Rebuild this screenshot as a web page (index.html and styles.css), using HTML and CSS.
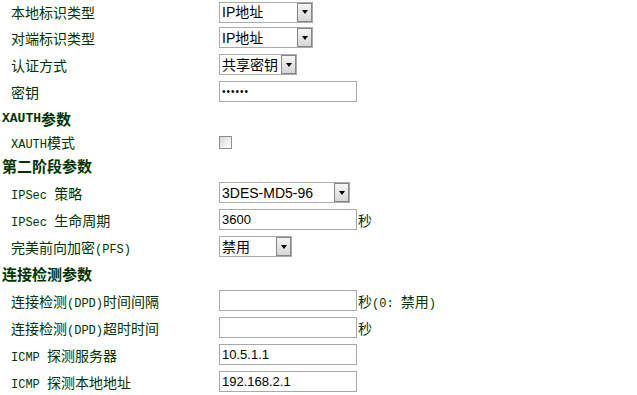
FILE: index.html
```html
<!DOCTYPE html>
<html lang="zh-CN">
<head>
    <meta charset="UTF-8">
    <link rel="stylesheet" href="styles.css">
    <title>IPSec 参数</title>
</head>
<body>

    <div class="form">
        <div class="row">
            <div class="label">本地标识类型</div>
            <div class="field">
                <span class="select select-lg"><select><option>IP地址</option></select><span class="arrow"></span></span>
            </div>
        </div>
        <div class="row">
            <div class="label">对端标识类型</div>
            <div class="field">
                <span class="select select-lg"><select><option>IP地址</option></select><span class="arrow"></span></span>
            </div>
        </div>
        <div class="row">
            <div class="label">认证方式</div>
            <div class="field">
                <span class="select select-md"><select><option>共享密钥</option></select><span class="arrow"></span></span>
            </div>
        </div>
        <div class="row">
            <div class="label">密钥</div>
            <div class="field">
                <input class="text pass" type="password" value="123456">
            </div>
        </div>

        <div class="row heading"><span class="en">XAUTH</span>参数</div>
        <div class="row row-check">
            <div class="label"><span class="en">XAUTH</span>模式</div>
            <div class="field">
                <input class="check" type="checkbox">
            </div>
        </div>

        <div class="row heading">第二阶段参数</div>
        <div class="row">
            <div class="label"><span class="en">IPSec </span>策略</div>
            <div class="field">
                <span class="select select-xl"><select><option>3DES-MD5-96</option></select><span class="arrow"></span></span>
            </div>
        </div>
        <div class="row">
            <div class="label"><span class="en">IPSec </span>生命周期</div>
            <div class="field">
                <input class="text" type="text" value="3600"><span class="unit">秒</span>
            </div>
        </div>
        <div class="row">
            <div class="label">完美前向加密<span class="en">(PFS)</span></div>
            <div class="field">
                <span class="select select-sm"><select><option>禁用</option></select><span class="arrow"></span></span>
            </div>
        </div>

        <div class="row heading">连接检测参数</div>
        <div class="row">
            <div class="label">连接检测<span class="en">(DPD)</span>时间间隔</div>
            <div class="field">
                <input class="text" type="text" value=""><span class="unit">秒<span class="en">(0: </span>禁用<span class="en">)</span></span>
            </div>
        </div>
        <div class="row">
            <div class="label">连接检测<span class="en">(DPD)</span>超时时间</div>
            <div class="field">
                <input class="text" type="text" value=""><span class="unit">秒</span>
            </div>
        </div>
        <div class="row">
            <div class="label"><span class="en">ICMP </span>探测服务器</div>
            <div class="field">
                <input class="text" type="text" value="10.5.1.1">
            </div>
        </div>
        <div class="row">
            <div class="label"><span class="en">ICMP </span>探测本地地址</div>
            <div class="field">
                <input class="text" type="text" value="192.168.2.1">
            </div>
        </div>
    </div>

</body>
</html>
```

FILE: styles.css
```css
body {
    margin: 0;
    padding: 0;
    background-color: #ffffff;
    font-family: "Noto Sans CJK SC", sans-serif;
    font-size: 14px;
    color: #003300;
}

.form {
    display: flex;
    flex-direction: column;
}

.row {
    display: flex;
    align-items: center;
    height: 27px;
}

.row:first-child {
    height: 24px;
}

.row-check {
    height: 20px;
}

.label {
    width: 219px;
    padding-left: 11px;
    box-sizing: border-box;
    white-space: nowrap;
}

.heading {
    padding-left: 2px;
    font-size: 15px;
    font-weight: bold;
}

.en {
    font-family: "Liberation Mono", monospace;
    font-size: 12px;
}

.heading .en {
    font-size: 13px;
}

.field {
    display: flex;
    align-items: center;
}

/* dropdowns */
.select {
    display: inline-flex;
    height: 21px;
    box-sizing: border-box;
    border: 1px solid #a5acb2;
    background-color: #ffffff;
}

.select-sm { width: 73px; }
.select-md { width: 78px; }
.select-lg { width: 94px; }
.select-xl { width: 131px; }

.select select {
    flex: 1;
    min-width: 0;
    -webkit-appearance: none;
    appearance: none;
    border: 0;
    outline: none;
    background: transparent;
    padding: 0 0 0 2px;
    margin: 0;
    font-family: "Liberation Sans", "Noto Sans CJK SC", sans-serif;
    font-size: 14px;
    color: #000000;
}

.arrow {
    width: 15px;
    box-sizing: border-box;
    border: 1px solid #868686;
    background: linear-gradient(#f6f6f6, #d6d6d6);
    display: flex;
    align-items: center;
    justify-content: center;
}

.arrow::after {
    content: "";
    border-left: 3px solid transparent;
    border-right: 3px solid transparent;
    border-top: 4px solid #000000;
}

/* text inputs */
.text {
    width: 138px;
    height: 21px;
    box-sizing: border-box;
    margin: 0;
    padding: 0 2px;
    border: 1px solid #a9a9a9;
    outline: none;
    font-family: "Liberation Sans", sans-serif;
    font-size: 13px;
    color: #000000;
}

.pass {
    font-size: 10px;
    letter-spacing: 1px;
}

.unit {
    margin-left: 1px;
    white-space: nowrap;
}

.check {
    -webkit-appearance: none;
    appearance: none;
    width: 13px;
    height: 13px;
    margin: 0;
    border: 1px solid #8f8f8f;
    background: linear-gradient(135deg, #d8d8d8, #ffffff);
}
```
